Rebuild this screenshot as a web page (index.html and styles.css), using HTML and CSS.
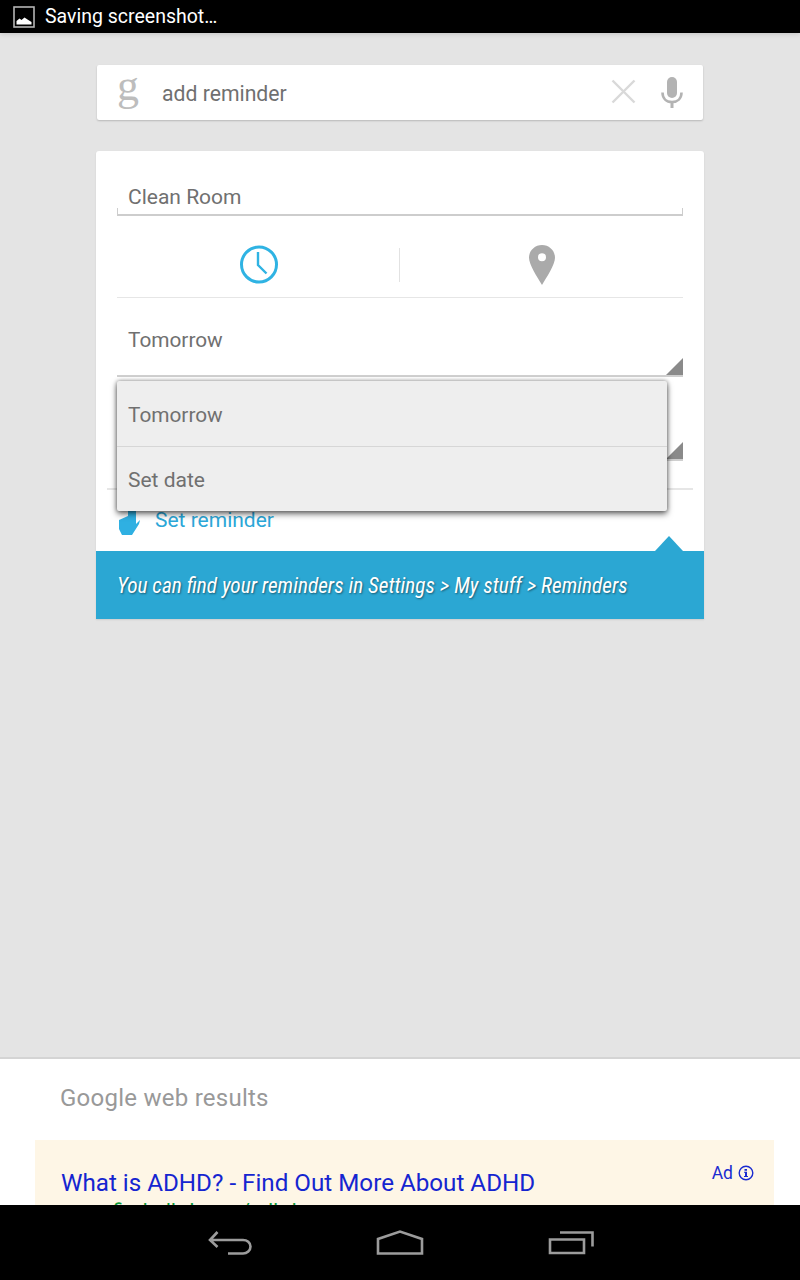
FILE: index.html
```html
<!DOCTYPE html>
<html lang="en">
<head>
    <meta charset="UTF-8">
    <title>Add reminder</title>
    <link rel="stylesheet" href="styles.css">
</head>
<body>
    <div class="status-bar">
        <svg class="status-icon" width="22" height="22" viewBox="0 0 22 22">
            <rect x="1" y="1" width="20" height="20" fill="#000" stroke="#b5b5b5" stroke-width="1.6"/>
            <path d="M3.5 18.5v-3.5l3-2.5 2 1.5 3-2.5 3 2 4 2.5v2.5z" fill="#fff"/>
        </svg>
        <span class="status-text">Saving screenshot…</span>
    </div>

    <div class="main">
        <div class="search-box">
            <span class="google-g">g</span>
            <span class="search-text">add reminder</span>
            <svg class="clear-icon" width="25" height="25" viewBox="0 0 25 25">
                <path d="M1.5 1.5l22 22M23.500 1.500l-22 22" stroke="#d9d9d9" stroke-width="2.400" fill="none"/>
            </svg>
            <svg class="mic-icon" width="22" height="31" viewBox="0 0 22 31">
                <rect x="6" y="0" width="10" height="21" rx="5" fill="#b3b3b3"/>
                <path d="M1.500 15.500c0 6 4 9.500 9.500 9.500s9.500-3.500 9.500-9.500" stroke="#b3b3b3" stroke-width="2.600" fill="none"/>
                <rect x="9.500" y="24" width="3" height="7" fill="#b3b3b3"/>
            </svg>
        </div>

        <div class="card">
            <div class="title-field">Clean Room</div>

            <div class="trigger-tabs">
                <div class="tab">
                    <svg width="40" height="40" viewBox="0 0 40 40">
                        <circle cx="20" cy="19.500" r="17.500" stroke="#2fb3e3" stroke-width="3" fill="none"/>
                        <path d="M19 7v13l8.500 8.500" stroke="#2fb3e3" stroke-width="2.400" fill="none"/>
                    </svg>
                </div>
                <div class="tab tab-last">
                    <svg width="26" height="40" viewBox="0 0 26 40">
                        <path fill-rule="evenodd" d="M13 0c7.300 0 13 5.600 13 12.800 0 6.500-8.200 19.500-13 27.200C8.200 32.300 0 19.300 0 12.800 0 5.600 5.700 0 13 0zm0 8.200a4 4 0 1 0 0 8 4 4 0 0 0 0-8z" fill="#aaa"/>
                    </svg>
                </div>
            </div>

            <div class="select-field select-day">Tomorrow</div>
            <div class="select-field select-time"></div>

            <div class="action-row">
                <svg class="hand-icon" width="24" height="26" viewBox="0 0 24 26">
                    <path d="M2 10l9-4V0h8v14l4-4-1 4-7 11H5l-3-6z" fill="#2fb0e2"/>
                </svg>
                <span class="action-text">Set reminder</span>
            </div>

            <div class="tip-banner">
                <span class="tip-notch"></span>
                <span class="tip-text">You can find your reminders in Settings &gt; My stuff &gt; Reminders</span>
            </div>

            <div class="dropdown">
                <div class="dropdown-item">Tomorrow</div>
                <div class="dropdown-item">Set date</div>
            </div>
        </div>

        <div class="results">
            <div class="results-label">Google web results</div>
            <div class="ad">
                <div class="ad-head">
                    <span class="ad-title">What is ADHD? - Find Out More About ADHD</span>
                    <span class="ad-tag">Ad
                        <svg width="16" height="16" viewBox="0 0 16 16">
                            <circle cx="8" cy="8" r="6.800" stroke="#1a2bd0" stroke-width="1.400" fill="none"/>
                            <path d="M6.500 4h2.500v1.800H6.500zM6 6.800h3v4.200h1v1H6v-1h1V7.800H6z" fill="#1a2bd0"/>
                        </svg>
                    </span>
                </div>
                <div class="ad-url">www.findadhd.com/adhd</div>
            </div>
        </div>
    </div>

    <div class="nav-bar">
        <svg width="44" height="26" viewBox="0 0 44 26">
            <path d="M9.500 2L2 10l7.500 7M2 10h33c4 0 7.500 2.500 7.500 6.500S39 23.500 35 23.500H20" stroke="#9c9c9c" stroke-width="2.600" fill="none"/>
        </svg>
        <svg width="48" height="26" viewBox="0 0 48 26">
            <path d="M2 23.500V9L24 1.500 46 9v14.500z" stroke="#9c9c9c" stroke-width="2.600" fill="none"/>
        </svg>
        <svg width="46" height="26" viewBox="0 0 46 26">
            <path d="M2 9.500h34v13.500H2zM12 2.500h32.500v14" stroke="#9c9c9c" stroke-width="2.600" fill="none"/>
        </svg>
    </div>
</body>
</html>
```
FILE: styles.css
```css
body {
    margin: 0;
    height: 1280px;
    overflow: hidden;
    display: flex;
    flex-direction: column;
    font-family: Roboto, "Liberation Sans", sans-serif;
    color: #707070;
    background-color: #e4e4e4;
}
.status-bar {
    flex: 0 0 33px;
    display: flex;
    align-items: center;
    padding-left: 13px;
    background-color: #000;
    box-shadow: 0 1px 5px rgba(0, 0, 0, 0.15);
    position: relative;
    z-index: 1;
}
.status-icon {
    margin-right: 10px;
}
.status-text {
    color: #fff;
    font-size: 19.500px;
}
.main {
    flex: 1;
    min-height: 0;
    display: flex;
    flex-direction: column;
}
.search-box {
    height: 55px;
    margin: 32px 97px 0;
    display: flex;
    align-items: center;
    background-color: #fff;
    border-radius: 2px;
    box-shadow: 0 1px 2px rgba(0, 0, 0, 0.2);
}
.google-g {
    width: 65px;
    padding-left: 20px;
    box-sizing: border-box;
    font-family: "Liberation Serif", serif;
    font-size: 44px;
    line-height: 44px;
    color: #bdbdbd;
    margin-top: -14px;
}
.search-text {
    flex: 1;
    font-size: 21.200px;
    padding-top: 1px;
}
.clear-icon {
    margin: -2px 25px 0 0;
}
.mic-icon {
    margin-right: 20px;
}
.card {
    position: relative;
    margin: 31px 96px 0;
    height: 468px;
    background-color: #fff;
    border-radius: 3px 3px 0 0;
    box-shadow: 0 1px 2px rgba(0, 0, 0, 0.1);
}
.title-field {
    position: relative;
    top: 27px;
    height: 36px;
    margin: 0 21px 27px;
    padding-left: 11px;
    line-height: 38px;
    font-size: 21px;
    border-bottom: 2px solid #cdcdcd;
}
.title-field::before,
.title-field::after {
    content: "";
    position: absolute;
    bottom: 0;
    width: 1px;
    height: 6px;
    background-color: #cdcdcd;
}
.title-field::before {
    left: 0;
}
.title-field::after {
    right: 0;
}
.trigger-tabs {
    margin: 0 21px;
    height: 66px;
    padding-bottom: 15px;
    display: flex;
    align-items: flex-end;
    border-bottom: 1px solid #e6e6e6;
}
.tab {
    flex: 1;
    height: 34px;
    display: flex;
    align-items: center;
    justify-content: center;
}
.tab-last {
    margin-left: -1px;
    border-left: 1px solid #e2e2e2;
}
.select-field {
    margin: 0 21px;
    padding-left: 11px;
    font-size: 20.800px;
    line-height: 84px;
    border-bottom: 2px solid #cfcfcf;
    position: relative;
}
.select-field::after {
    content: "";
    position: absolute;
    right: 0;
    bottom: 0;
    border-style: solid;
    border-width: 0 0 17px 17px;
    border-color: transparent transparent #8a8a8a transparent;
}
.select-day {
    height: 77px;
}
.select-time {
    height: 82px;
}
.action-row {
    height: 63px;
    margin: 27px 11px 0;
    padding-left: 10px;
    display: flex;
    align-items: center;
    border-top: 2px solid #e6e6e6;
    box-sizing: border-box;
}
.hand-icon {
    margin: 4px 14px 0 0;
}
.action-text {
    color: #2ba7d8;
    font-size: 21px;
    margin-top: -2px;
}
.tip-banner {
    height: 68px;
    position: relative;
    display: flex;
    align-items: center;
    padding-left: 21px;
    background-color: #2ba7d3;
}
.tip-notch {
    position: absolute;
    top: -15px;
    right: 21px;
    border-style: solid;
    border-width: 0 14px 15px 14px;
    border-color: transparent transparent #2ba7d3 transparent;
}
.tip-text {
    color: #fff;
    font-family: "Roboto Condensed", "Liberation Sans Narrow", Roboto, sans-serif;
    font-style: italic;
    font-size: 21.300px;
    white-space: nowrap;
    text-shadow: 1px 1px 2px rgba(0, 0, 0, 0.45);
}
.dropdown {
    position: absolute;
    top: 230px;
    left: 21px;
    width: 550px;
    background-color: #eee;
    border-radius: 2px;
    box-shadow: 0 3px 6px rgba(0, 0, 0, 0.55), 0 0 4px rgba(0, 0, 0, 0.4);
}
.dropdown-item {
    height: 65px;
    line-height: 68px;
    padding-left: 11px;
    font-size: 20.800px;
}
.dropdown-item + .dropdown-item {
    height: 64px;
    line-height: 66px;
    font-size: 21px;
    border-top: 1px solid #d6d6d6;
}
.results {
    margin-top: auto;
    height: 148px;
    overflow: hidden;
    box-sizing: border-box;
    background-color: #fff;
    border-top: 2px solid #d4d4d4;
}
.results-label {
    height: 81px;
    padding-left: 60px;
    line-height: 78px;
    font-size: 24px;
    letter-spacing: 0.25px;
    color: #999;
}
.ad {
    margin: 0 26px 0 35px;
    padding: 27px 20px 0 26px;
    background-color: #fef6e6;
}
.ad-head {
    display: flex;
    justify-content: space-between;
}
.ad-title {
    color: #1525d0;
    font-size: 24.200px;
    line-height: 32px;
}
.ad-tag {
    color: #1a2bd0;
    font-size: 17.500px;
    line-height: 14px;
    display: flex;
    align-items: center;
    gap: 5px;
    height: 14px;
    margin-top: -1px;
}
.ad-url {
    color: #0b9a3a;
    font-size: 21px;
    line-height: 24px;
}
.nav-bar {
    flex: 0 0 75px;
    display: flex;
    align-items: center;
    justify-content: center;
    gap: 124px;
    padding-left: 2px;
    background-color: #000;
    position: relative;
}
```
